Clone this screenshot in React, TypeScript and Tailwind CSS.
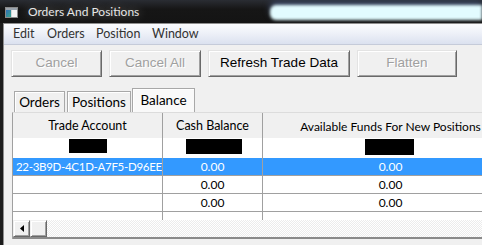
import React from "react";

const Btn = ({ label, w, disabled }: { label: string; w: string; disabled?: boolean }) => (
  <div
    className={`${w} h-[27px] flex items-center justify-center bg-[#f0f0f0] border border-t-[#e3e3e3] border-l-[#e3e3e3] border-r-[#696969] border-b-[#696969] shadow-[inset_1px_1px_0_#ffffff,inset_-1px_-1px_0_#a0a0a0] font-['Liberation_Sans',sans-serif] text-[13.5px] ${
      disabled ? "text-[#a0a0a0] [text-shadow:1px_1px_0_#ffffff]" : "text-black"
    }`}
  >
    {label}
  </div>
);

const Tab = ({ label, w, active }: { label: string; w: string; active?: boolean }) => (
  <div
    className={`${w} flex items-center justify-center border border-[#a8a8a8] border-b-0 shadow-[inset_1px_1px_0_#ffffff] text-[13.5px] text-black ${
      active ? "h-[24px] bg-[#f9f9f9] -mx-[1px] z-10 pb-[1px]" : "h-[21px] bg-[#f0f0f0]"
    }`}
  >
    {label}
  </div>
);

const Row = ({
  a,
  b,
  c,
  sel,
  h = "h-[18px]",
  line = true,
}: {
  a?: string;
  b?: string;
  c?: string;
  sel?: boolean;
  h?: string;
  line?: boolean;
}) => (
  <div
    className={`flex ${h} ${line ? "border-b border-[#a0a0a0]" : ""} ${
      sel ? "bg-[#3399ff] text-white" : "bg-white text-black"
    } text-[12px] leading-none shrink-0`}
  >
    <div className="w-[150px] shrink-0 border-r border-[#a0a0a0] flex items-center pl-[3px] overflow-hidden whitespace-nowrap text-[11.5px] tracking-[-0.3px]">
      {a}
    </div>
    <div className="w-[100px] shrink-0 border-r border-[#a0a0a0] flex items-center justify-center">{b}</div>
    <div className="w-[255px] shrink-0 flex items-center justify-center">{c}</div>
  </div>
);

export default function App() {
  return (
    <div className="w-[482px] h-[245px] overflow-hidden bg-[#161616] flex flex-col font-['Lato',sans-serif]">
      {/* Title bar */}
      <div className="h-[23px] shrink-0 flex items-center bg-[linear-gradient(#2a2d33,#161616_40%,#141414)]">
        <svg width="13" height="11" viewBox="0 0 13 11" className="ml-[5px] mt-[1px]">
          <rect x="0.5" y="0.5" width="12" height="10" fill="#d8d8d8" stroke="#8a8a8a" />
          <rect x="1" y="1" width="11" height="2" fill="#9aa3ad" />
          <defs>
            <linearGradient id="ig" x1="0" y1="0" x2="1" y2="1">
              <stop offset="0" stopColor="#2f6fb8" />
              <stop offset="1" stopColor="#3aa68a" />
            </linearGradient>
          </defs>
          <rect x="1" y="3" width="5" height="7" fill="url(#ig)" />
          <rect x="7" y="3" width="5" height="7" fill="#f4f4f4" />
        </svg>
        <div className="ml-[10px] text-[12px] text-[#e6e6e6] [text-shadow:0_0_8px_rgba(150,150,150,0.9)] whitespace-nowrap">
          Orders And Positions
        </div>
        <div className="ml-auto w-[212px] h-[15px] mt-[2px] rounded-l-[6px] bg-[#e2fbff] blur-[1.5px] shadow-[0_-4px_6px_#3b4866]" />
      </div>

      <div className="flex flex-1 min-h-0">
        <div className="w-[3px] bg-[#1c1c1c] shrink-0" />
        <div className="flex-1 min-w-0 flex flex-col border-l border-t border-[#8e8e8e] bg-[#f0f0f0]">
          {/* Menu bar */}
          <div className="h-[21px] shrink-0 flex items-center pl-[9px] bg-[linear-gradient(#fbfcfe,#eef1f8_45%,#dbe1ef)] border-b border-[#c5cbd9] text-[12.5px] text-[#333]">
            <span className="w-[34px]">Edit</span>
            <span className="w-[49px]">Orders</span>
            <span className="w-[56px]">Position</span>
            <span>Window</span>
          </div>

          {/* Buttons */}
          <div className="flex gap-[7px] ml-[7px] mt-[5px] shrink-0">
            <Btn label="Cancel" w="w-[91px]" disabled />
            <Btn label="Cancel All" w="w-[92px]" disabled />
            <Btn label="Refresh Trade Data" w="w-[142px]" />
            <Btn label="Flatten" w="w-[100px]" disabled />
          </div>

          {/* Tabs */}
          <div className="flex items-end ml-[10px] mt-[11px] h-[24px] shrink-0 gap-[2px]">
            <Tab label="Orders" w="w-[51px]" />
            <Tab label="Positions" w="w-[64px]" />
            <Tab label="Balance" w="w-[63px]" active />
          </div>

          {/* Grid */}
          <div className="ml-[8px] flex flex-col border-l border-t border-[#a0a0a0] border-t-[#dcdcdc] overflow-hidden shrink-0">
            <div className="flex h-[25px] shrink-0 bg-[#f0f0f0] text-[12.5px] text-black pt-[2px]">
              <div className="w-[150px] shrink-0 border-r border-[#a0a0a0] -mt-[2px] pt-[2px] flex items-center justify-center">
                Trade Account
              </div>
              <div className="w-[100px] shrink-0 border-r border-[#a0a0a0] -mt-[2px] pt-[2px] flex items-center justify-center">
                Cash Balance
              </div>
              <div className="w-[255px] shrink-0 flex items-center justify-center whitespace-nowrap text-[12px]">
                Available Funds For New Positions
              </div>
            </div>
            <div className="flex h-[20px] shrink-0 bg-white">
              <div className="w-[150px] shrink-0 border-r border-[#a0a0a0] flex items-start pt-[1px] pl-[56px]">
                <div className="w-[38px] h-[14px] bg-black" />
              </div>
              <div className="w-[100px] shrink-0 border-r border-[#a0a0a0] flex items-start pt-[1px] pl-[23px]">
                <div className="w-[56px] h-[15px] bg-black" />
              </div>
              <div className="w-[255px] shrink-0 flex items-start pt-[1px] pl-[102px]">
                <div className="w-[49px] h-[16px] bg-black" />
              </div>
            </div>
            <Row a="22-3B9D-4C1D-A7F5-D96EE2A1" b="0.00" c="0.00" sel />
            <Row b="0.00" c="0.00" />
            <Row b="0.00" c="0.00" />
            <Row h="h-[8px]" line={false} />
            {/* Scrollbar */}
            <div className="flex h-[17px] shrink-0 bg-[repeating-conic-gradient(#ffffff_0_25%,#ececec_0_50%)] bg-[length:2px_2px]">
              <div className="w-[17px] h-[17px] bg-[#f0f0f0] border border-t-[#f0f0f0] border-l-[#f0f0f0] border-r-[#696969] border-b-[#696969] shadow-[inset_1px_1px_0_#ffffff,inset_-1px_-1px_0_#a0a0a0] flex items-center justify-center">
                <svg width="4" height="7" viewBox="0 0 4 7">
                  <path d="M4 0 L0 3.5 L4 7 Z" fill="#000" />
                </svg>
              </div>
              <div className="w-[17px] h-[17px] bg-[#f0f0f0] border border-t-[#f0f0f0] border-l-[#f0f0f0] border-r-[#696969] border-b-[#696969] shadow-[inset_1px_1px_0_#ffffff,inset_-1px_-1px_0_#a0a0a0]" />
            </div>
            <div className="h-[2px] bg-[#8a8a8a] shrink-0" />
          </div>
        </div>
      </div>
    </div>
  );
}
